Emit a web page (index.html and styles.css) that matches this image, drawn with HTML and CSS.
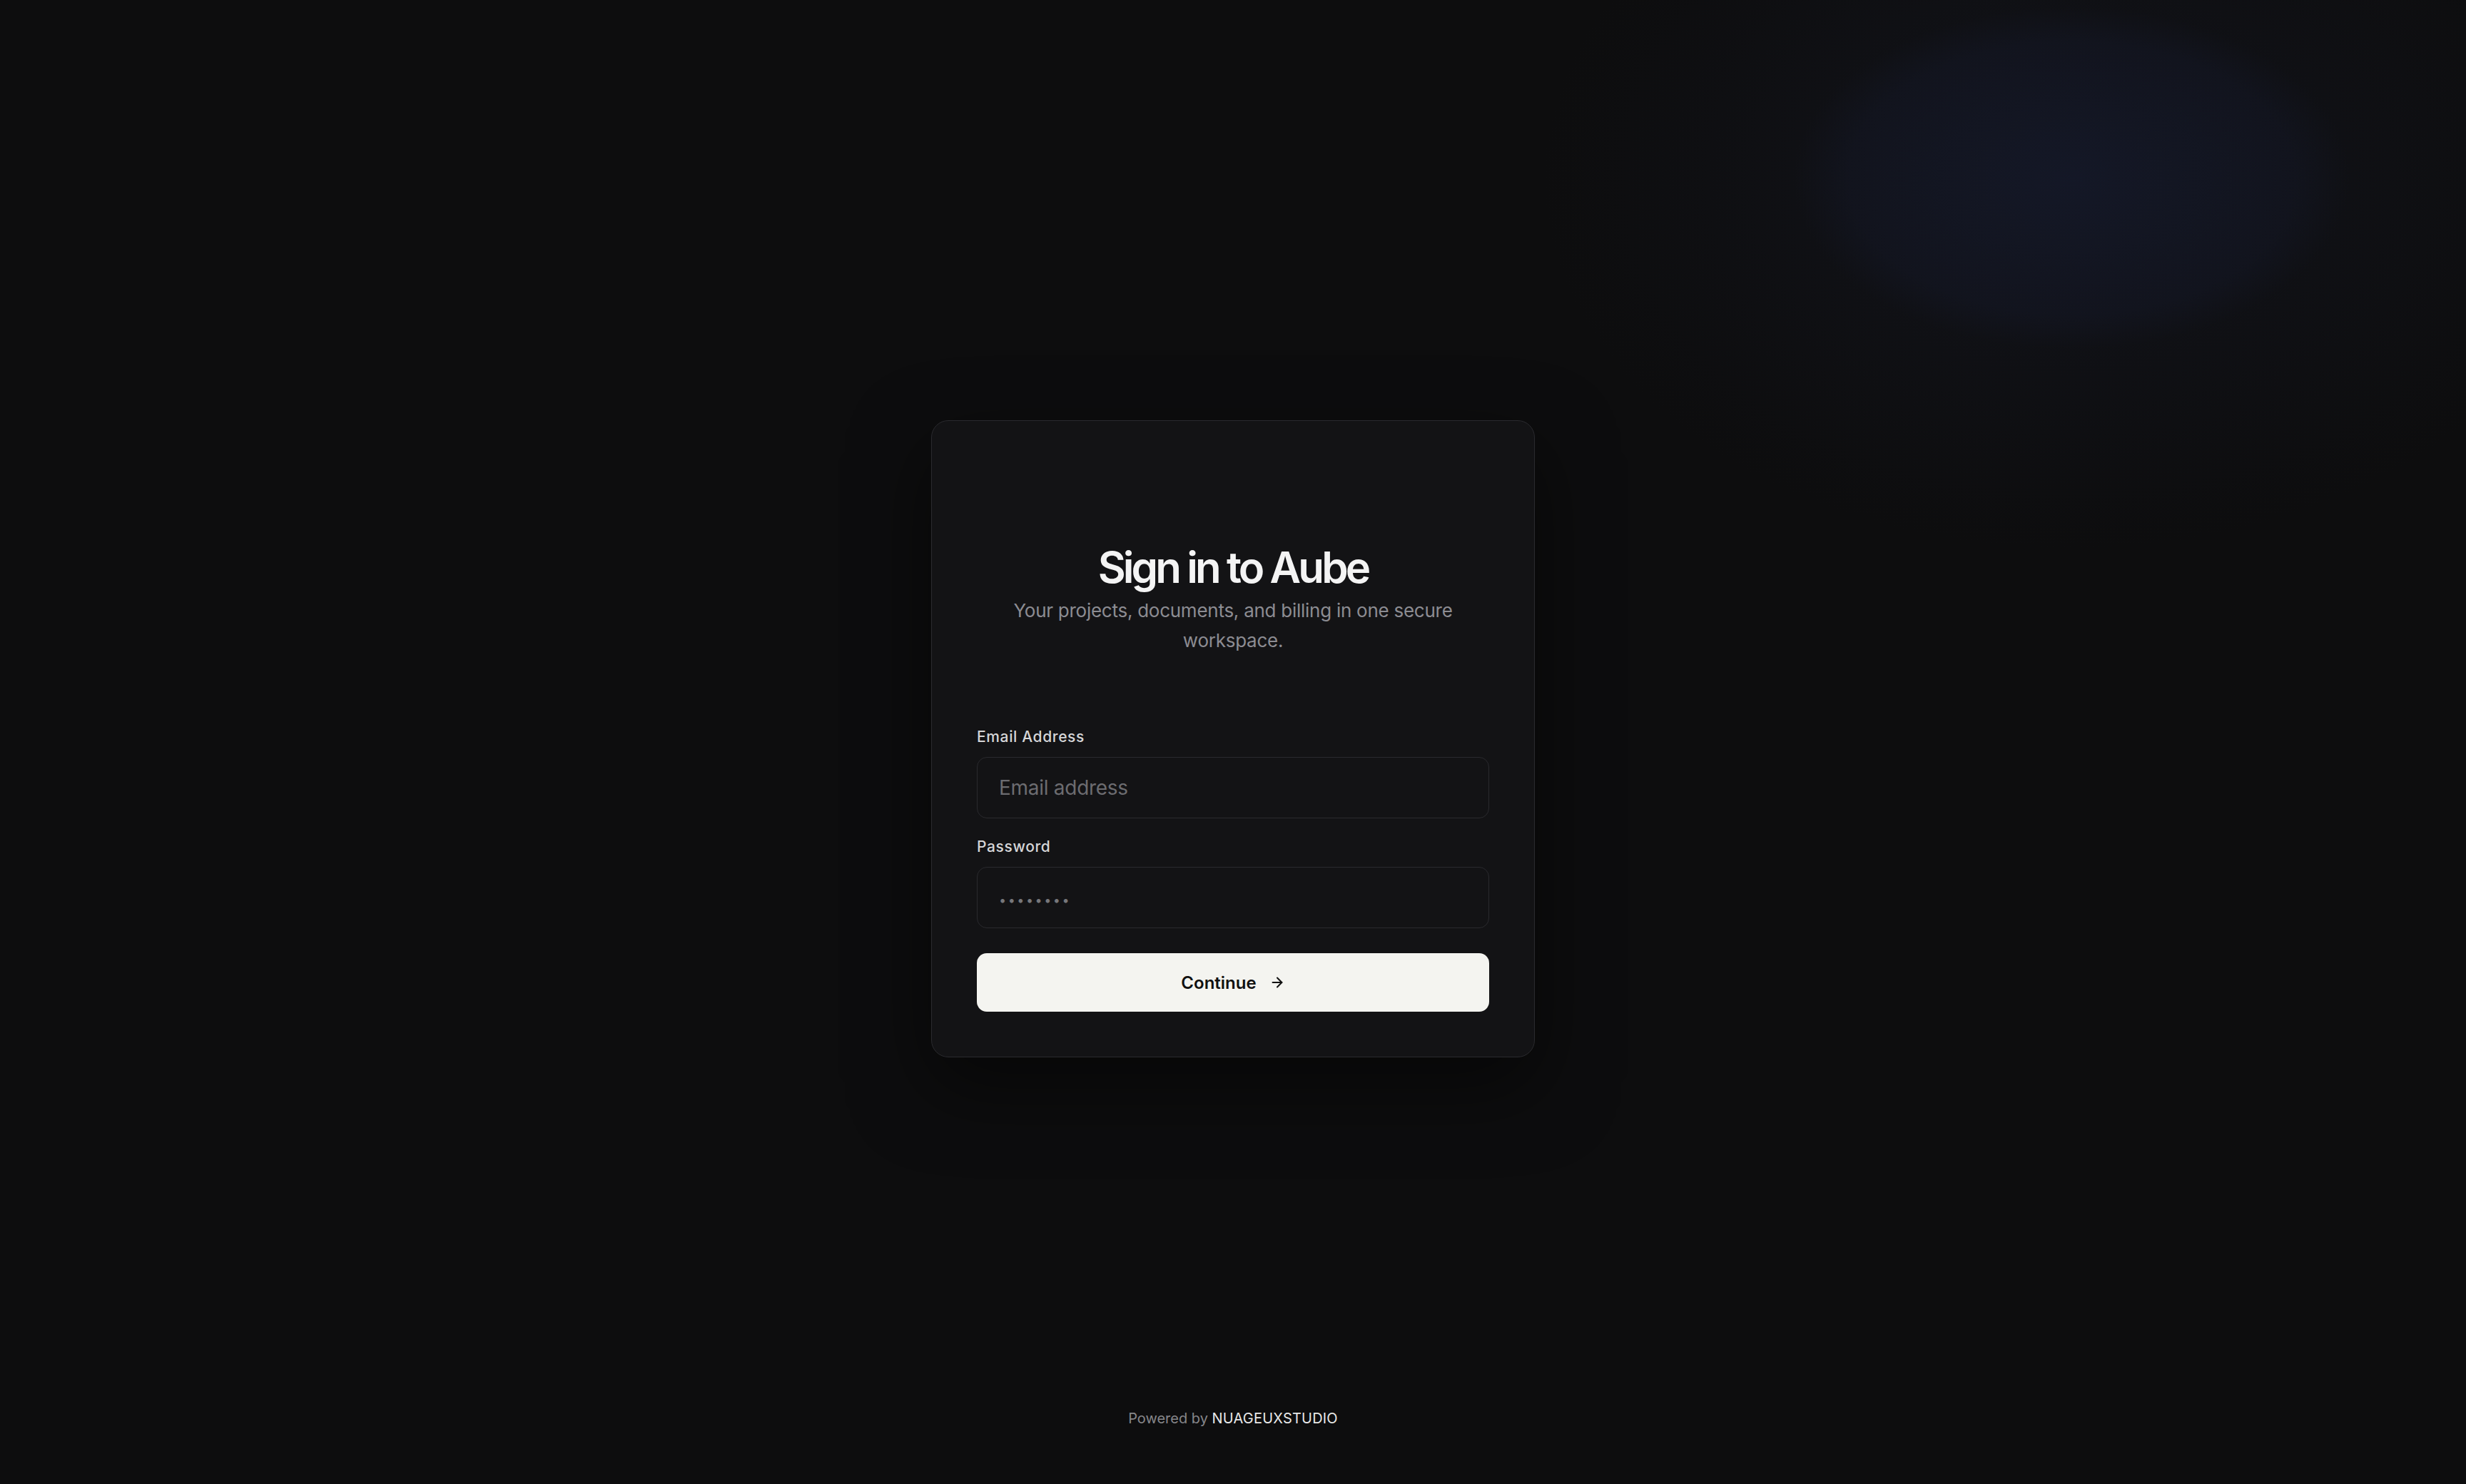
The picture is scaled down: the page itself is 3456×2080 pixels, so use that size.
FILE: index.html
```html
<!DOCTYPE html>
<html lang="en">
<head>
<meta charset="UTF-8">
<meta name="viewport" content="width=device-width, initial-scale=1.0">
<title>Sign in to Aube</title>
<link rel="stylesheet" href="styles.css">
</head>
<body>
<div class="page">
    <div class="spacer"></div>
    <main class="card">
        <div class="card-head">
            <h1>Sign in to Aube</h1>
            <p class="subtitle">Your projects, documents, and billing in one secure workspace.</p>
        </div>
        <form class="form" onsubmit="return false;">
            <div class="field">
                <label for="email">Email Address</label>
                <input type="email" id="email" placeholder="Email address">
            </div>
            <div class="field">
                <label for="password">Password</label>
                <input type="password" id="password" class="pw" placeholder="••••••••">
            </div>
            <button type="submit" class="btn">
                Continue
                <svg width="22" height="22" viewBox="0 0 24 24" fill="none" stroke="currentColor" stroke-width="2.2" stroke-linecap="round" stroke-linejoin="round"><path d="M5 12h14"/><path d="m12 5 7 7-7 7"/></svg>
            </button>
        </form>
    </main>
    <footer class="footer">
        <span class="muted">Powered by</span> <span class="brand">NUAGEUXSTUDIO</span>
    </footer>
</div>
</body>
</html>
```

FILE: styles.css
```css
html, body {
    margin: 0;
    height: 100%;
}
body {
    font-family: Inter, "Noto Sans", sans-serif;
    color: #f2f2f2;
    background-color: #0d0d0e;
    background-image:
        radial-gradient(ellipse 390px 240px at 84% 12%, rgba(22, 27, 48, 0.55), rgba(22, 27, 48, 0.3) 80%, rgba(22, 27, 48, 0) 100%),
        radial-gradient(ellipse 740px 520px at 84% 12%, rgba(19, 21, 30, 0.8), rgba(19, 21, 30, 0) 100%);
}
.page {
    height: 100vh;
    display: grid;
    grid-template-rows: 1fr auto 1fr;
    justify-items: center;
}
.card {
    box-sizing: border-box;
    width: 846px;
    margin-top: -9px;
    padding: 63px;
    background: #131315;
    border: 1px solid #2a2a2e;
    border-radius: 24px;
    box-shadow: 0 40px 110px rgba(0, 0, 0, 0.5);
}
.card-head {
    text-align: center;
    padding-top: 106px;
    margin-bottom: 98px;
}
h1 {
    margin: 0;
    font-size: 60px;
    line-height: 72px;
    font-weight: 600;
    letter-spacing: -0.065em;
    color: #f4f4f4;
}
.subtitle {
    margin: 4px auto 0;
    max-width: 640px;
    font-size: 26px;
    line-height: 42px;
    letter-spacing: -0.01em;
    color: #8c8c92;
}
.form {
    display: flex;
    flex-direction: column;
}
.field {
    display: flex;
    flex-direction: column;
    margin-bottom: 24px;
}
.field label {
    font-size: 21px;
    line-height: 32px;
    font-weight: 500;
    color: #d6d6d8;
    margin-bottom: 12px;
    letter-spacing: 0.03em;
}
.field input {
    box-sizing: border-box;
    height: 86px;
    padding: 0 30px;
    background: #131315;
    border: 1px solid #2a2a2e;
    border-radius: 14px;
    font-family: inherit;
    font-size: 28px;
    letter-spacing: -0.01em;
    color: #f2f2f2;
    outline: none;
}
.field input::placeholder {
    color: #6c6c70;
}
.field input.pw::placeholder {
    font-size: 18px;
    letter-spacing: 0.14em;
    color: #77777b;
}
.btn {
    margin-top: 11px;
    height: 82px;
    display: flex;
    align-items: center;
    justify-content: center;
    gap: 18px;
    background: #f4f4f0;
    color: #111;
    border: none;
    border-radius: 14px;
    font-family: inherit;
    font-size: 24px;
    font-weight: 600;
    cursor: pointer;
}
.footer {
    align-self: end;
    padding-bottom: 78px;
    font-size: 20px;
    line-height: 28px;
}
.muted {
    color: #86868a;
}
.brand {
    color: #e8e8e8;
    letter-spacing: 0.01em;
}
```
